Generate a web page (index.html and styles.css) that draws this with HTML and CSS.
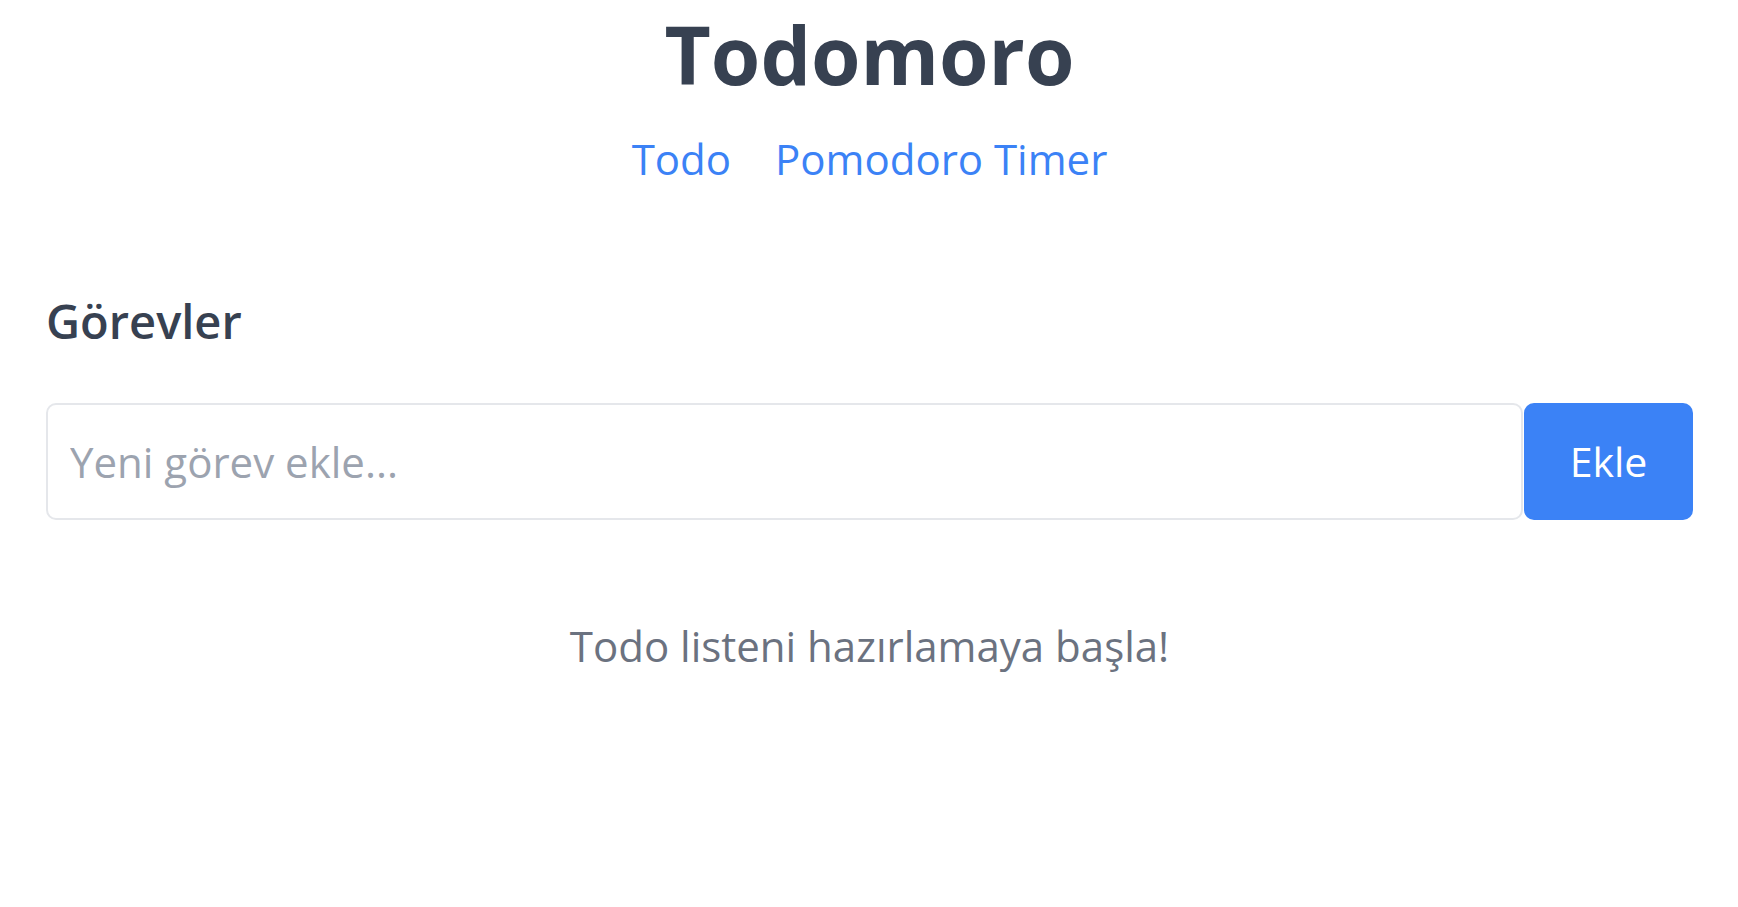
FILE: index.html
```html
<!DOCTYPE html>
<html lang="tr">
<head>
<meta charset="utf-8">
<title>Todomoro</title>
<link rel="stylesheet" href="styles.css">
</head>
<body>
<div class="app">
  <header class="header">
    <h1 class="title">Todomoro</h1>
    <nav class="nav">
      <a class="nav-link" href="#">Todo</a>
      <a class="nav-link" href="#">Pomodoro Timer</a>
    </nav>
  </header>
  <main class="main">
    <h2 class="section-title">Görevler</h2>
    <form class="add-form">
      <input class="add-input" type="text" placeholder="Yeni görev ekle...">
      <button class="add-button" type="button">Ekle</button>
    </form>
    <p class="empty">Todo listeni hazırlamaya başla!</p>
  </main>
</div>
</body>
</html>
```
FILE: styles.css
```css
* { box-sizing: border-box; }
html, body { margin: 0; padding: 0; background: #ffffff; }
body { font-family: "Open Sans", "Noto Sans", sans-serif; color: #374151; }
.app { padding: 0 45px 0 46px; }
.header { display: flex; flex-direction: column; align-items: center; }
.title { margin: 0; font-size: 80px; line-height: 1.36; font-weight: 700; color: #374151; }
.nav { display: flex; gap: 44px; margin-top: 21px; }
.nav-link { font-size: 42px; line-height: 1.36; color: #3b82f6; text-decoration: none; }
.main { margin-top: 103px; }
.section-title { margin: 0; font-size: 47px; line-height: 1.36; font-weight: 600; color: #374151; }
.add-form { display: flex; margin-top: 49px; height: 117px; }
.add-input { flex: 1; min-width: 0; border: 2px solid #e5e7eb; border-radius: 10px; padding: 0 22px; font-family: inherit; font-size: 42px; color: #374151; outline: none; }
.add-input::placeholder { color: #9ca3af; }
.add-button { width: 169px; margin-left: 1px; border: none; border-radius: 10px; background: #3b82f6; color: #ffffff; font-family: inherit; font-size: 41px; }
.empty { margin: 97px 0 0; text-align: center; font-size: 42px; line-height: 1.36; color: #6b7280; }
```
